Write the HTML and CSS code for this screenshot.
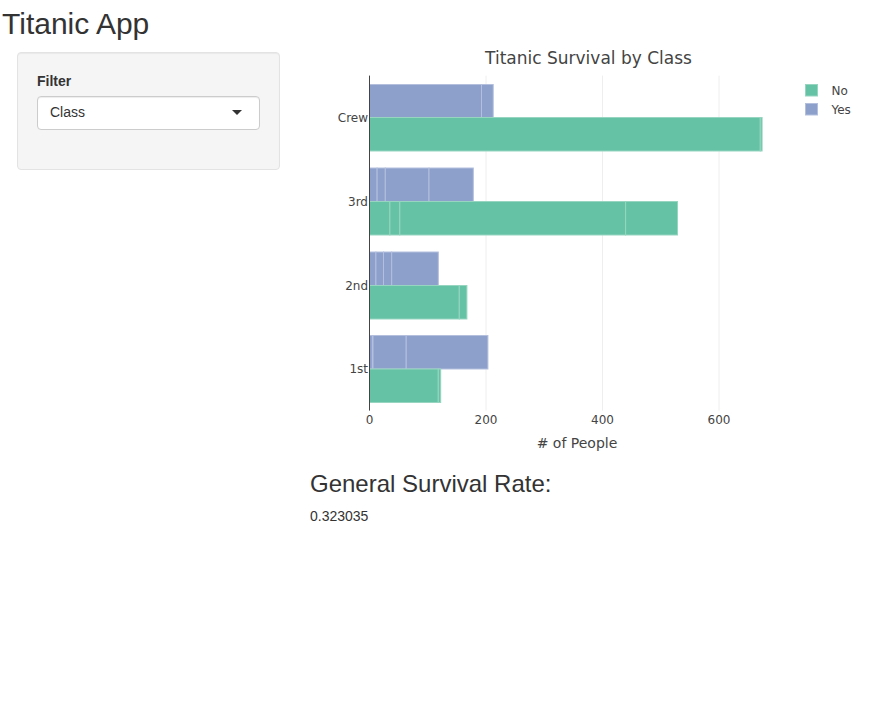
FILE: index.html
```html
<!DOCTYPE html>
<html lang="en">
<head>
<meta charset="utf-8">
<title>Titanic App</title>
<link rel="stylesheet" href="styles.css">
</head>
<body>
<h2 class="app-title">Titanic App</h2>
<div class="layout">
  <div class="sidebar">
    <div class="form-group">
      <label class="control-label">Filter</label>
      <div class="select-box">
        <span class="select-value">Class</span>
        <span class="caret"></span>
      </div>
    </div>
  </div>
  <div class="main">
    <svg class="chart" width="567" height="400" viewBox="310 52 567 400" xmlns="http://www.w3.org/2000/svg">
      <g class="grid">
        <line x1="486" y1="75.6" x2="486" y2="410.6"/>
        <line x1="602.5" y1="75.6" x2="602.5" y2="410.6"/>
        <line x1="719" y1="75.6" x2="719" y2="410.6"/>
      </g>
      <g class="bars yes">
        <rect x="369.5" y="84.5" width="112" height="33"/>
        <rect x="481.5" y="84.5" width="11.7" height="33"/>
        <rect x="369.5" y="168" width="7.6" height="33.5"/>
        <rect x="377.1" y="168" width="8.2" height="33.5"/>
        <rect x="385.3" y="168" width="43.7" height="33.5"/>
        <rect x="429" y="168" width="44.3" height="33.5"/>
        <rect x="369.5" y="252" width="6.4" height="33.5"/>
        <rect x="375.9" y="252" width="7.6" height="33.5"/>
        <rect x="383.5" y="252" width="8.2" height="33.5"/>
        <rect x="391.7" y="252" width="46.6" height="33.5"/>
        <rect x="369.5" y="335.5" width="2.9" height="33.5"/>
        <rect x="372.4" y="335.5" width="0.6" height="33.5"/>
        <rect x="373" y="335.5" width="33.2" height="33.5"/>
        <rect x="406.2" y="335.5" width="81.7" height="33.5"/>
      </g>
      <g class="bars no">
        <rect x="369.5" y="117.5" width="390.8" height="33.5"/>
        <rect x="760.3" y="117.5" width="1.8" height="33.5"/>
        <rect x="369.5" y="201.5" width="20.4" height="33.5"/>
        <rect x="389.9" y="201.5" width="9.9" height="33.5"/>
        <rect x="399.8" y="201.5" width="225.8" height="33.5"/>
        <rect x="625.6" y="201.5" width="51.9" height="33.5"/>
        <rect x="369.5" y="285.5" width="89.8" height="33.5"/>
        <rect x="459.3" y="285.5" width="7.6" height="33.5"/>
        <rect x="369.5" y="369" width="68.8" height="33.5"/>
        <rect x="438.3" y="369" width="2.4" height="33.5"/>
      </g>
      <line class="zeroline" x1="369.5" y1="75.6" x2="369.5" y2="410.6"/>
      <g class="ticks ytick">
        <text x="368" y="122">Crew</text>
        <text x="368" y="205.8">3rd</text>
        <text x="368" y="289.5">2nd</text>
        <text x="368" y="373.3">1st</text>
      </g>
      <g class="ticks xtick">
        <text x="369.5" y="424">0</text>
        <text x="486" y="424">200</text>
        <text x="602.5" y="424">400</text>
        <text x="719" y="424">600</text>
      </g>
      <text class="axis-title" x="577" y="447.5"># of People</text>
      <text class="chart-title" x="588.5" y="63.5">Titanic Survival by Class</text>
      <g class="legend">
        <rect class="swatch-no" x="805.5" y="84.5" width="12" height="11.5"/>
        <text x="831.5" y="95">No</text>
        <rect class="swatch-yes" x="805.5" y="103.5" width="12" height="11.5"/>
        <text x="831.5" y="114">Yes</text>
      </g>
    </svg>
    <h3 class="section-title">General Survival Rate:</h3>
    <div class="rate">0.323035</div>
  </div>
</div>
</body>
</html>
```
FILE: styles.css
```css
* {
  box-sizing: border-box;
}

body {
  margin: 0;
  font-family: "Liberation Sans", Arial, sans-serif;
  font-size: 14px;
  line-height: 1.42857;
  color: #333;
  background: #fff;
}

.app-title {
  font-size: 30px;
  font-weight: 500;
  line-height: 1.1;
  margin: 7px 0 12px 2px;
}

.layout {
  display: flex;
  align-items: flex-start;
}

.sidebar {
  margin-left: 17px;
  width: 263px;
  flex: none;
  background: #f5f5f5;
  border: 1px solid #e3e3e3;
  border-radius: 4px;
  box-shadow: inset 0 1px 1px rgba(0, 0, 0, 0.05);
  padding: 19px;
}

.form-group {
  margin-bottom: 20px;
}

.control-label {
  display: block;
  font-weight: 700;
  margin-bottom: 4px;
}

.select-box {
  display: flex;
  align-items: center;
  justify-content: space-between;
  height: 34px;
  padding: 6px 12px;
  background: #fff;
  border: 1px solid #ccc;
  border-radius: 4px;
  box-shadow: inset 0 1px 1px rgba(0, 0, 0, 0.075);
}

.select-value {
  color: #333;
}

.caret {
  width: 0;
  height: 0;
  border-style: solid;
  border-width: 5px 5px 0 5px;
  border-color: #333 transparent transparent transparent;
  margin-right: 5px;
  margin-top: -1px;
}

.main {
  margin-left: 30px;
  width: 567px;
  flex: none;
}

.chart {
  display: block;
  overflow: visible;
}

.grid line {
  stroke: #eee;
  stroke-width: 1;
}

.zeroline {
  stroke: #444;
  stroke-width: 1;
}

.bars.yes rect,
.swatch-yes {
  fill: #8da0cb;
  stroke: #b3bfdd;
  stroke-width: 1;
}

.bars.no rect,
.swatch-no {
  fill: #66c2a5;
  stroke: #97d5c0;
  stroke-width: 1;
}

.chart text {
  font-family: "DejaVu Sans", Verdana, sans-serif;
  fill: #444;
}

.ticks text {
  font-size: 12px;
}

.ytick text {
  text-anchor: end;
}

.xtick text {
  text-anchor: middle;
}

.axis-title {
  font-size: 14px;
  text-anchor: middle;
}

.chart-title {
  font-size: 17px;
  text-anchor: middle;
}

.legend text {
  font-size: 12px;
}

.section-title {
  font-size: 24px;
  font-weight: 500;
  line-height: 1.1;
  margin: 19px 0 10px 0;
}

.rate {
  margin: 0;
}
```
